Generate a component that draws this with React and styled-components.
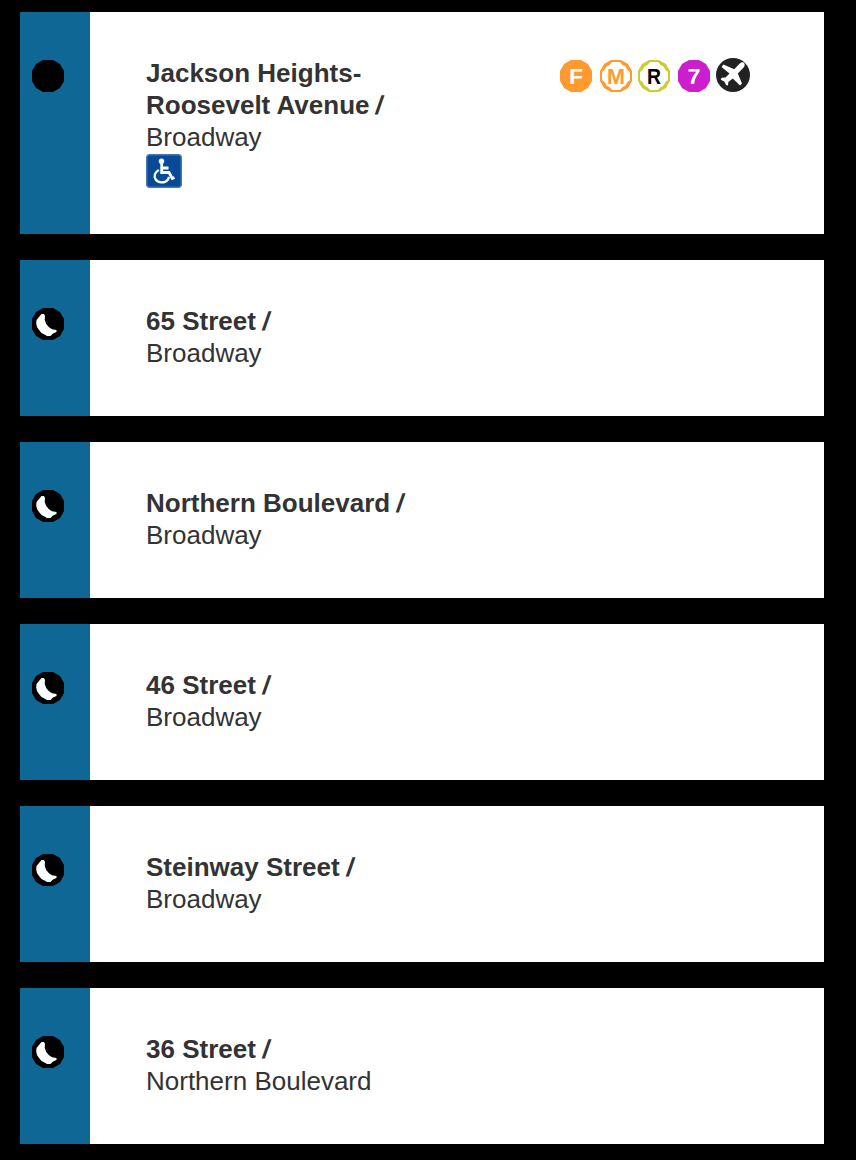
import React from 'react';
import styled, { createGlobalStyle } from 'styled-components';

const GlobalStyle = createGlobalStyle`
  * { box-sizing: border-box; }
  body {
    margin: 0;
    background: #000;
    color: #333;
    font-family: "Liberation Sans", Arial, sans-serif;
    font-size: 26px;
    line-height: 32px;
  }
`;

const StationList = styled.main`
  display: flex;
  flex-direction: column;
  gap: 26px;
  width: 856px;
  height: 1160px;
  padding: 12px 32px 16px 20px;
`;

const StationCard = styled.article`
  display: flex;
  height: ${(p) => (p.$tall ? 222 : 156)}px;
  flex: none;
  background: #fff;
`;

const LineStripe = styled.div`
  width: 70px;
  padding: 48px 0 0 12px;
  background: #0f6796;
`;

const StationName = styled.div`
  width: 414px;
  padding: 45px 0 0 56px;
`;

const Title = styled.div`
  font-weight: 700;
  white-space: nowrap;
`;

const Slash = styled.span`
  display: inline-block;
  margin-left: 7px;
  transform: skewX(-9deg);
`;

const Street = styled.div`
  white-space: nowrap;
`;

const Transfers = styled.div`
  display: flex;
  align-items: flex-start;
  padding: 48px 0 0 56px;
`;

const Icon = styled.svg`
  display: block;
  flex: none;
  margin: ${(p) => p.$margin || 0};
`;

const Letter = styled.text`
  font-family: "Liberation Sans", Arial, sans-serif;
  font-weight: 700;
  font-size: 22px;
  text-anchor: middle;
`;

const DISC = 'M11 0H21L28 4L32 11V21L28 28L21 32H11L4 28L0 21V11L4 4Z';
const HOLLOW = 'M12 2H20L22 4.5L25.5 6.5L27.5 10L30 12V20L27.5 22L25.5 25.5L22 27.5L20 30H12L10 27.5L6.5 25.5L4.5 22L2 20V12L4.5 10L6.5 6.5L10 4.5Z';

const FullTime = () => (
  <Icon width="32" height="32" viewBox="0 0 32 32">
    <path d={DISC} fill="#000" />
  </Icon>
);

const PartTime = () => (
  <Icon width="32" height="32" viewBox="0 0 32 32">
    <path d={DISC} fill="#000" />
    <path d="M9.5 6H12L13 8L12.7 12L14.2 16L17 19.3L20 21.3L24.5 22V24L21 25.5L18.5 28H15L12.5 26.5L9.5 25L7 22L5 19L4.2 15.5L4.5 12L7 9Z" fill="#fff" />
  </Icon>
);

const RouteBullet = ({ label, color, ink, width, hollow, margin }) => (
  <Icon width="32" height="32" viewBox="0 0 32 32" $margin={margin}>
    <path d={DISC} fill={color} />
    {hollow && <path d={HOLLOW} fill="#fff" />}
    <Letter
      x="16"
      y="23.7"
      fill={ink}
      textLength={width}
      lengthAdjust="spacingAndGlyphs"
    >
      {label}
    </Letter>
  </Icon>
);

const Airport = () => (
  <Icon width="34" height="34" viewBox="0 0 34 34" $margin="-2px 0 0 6px">
    <circle cx="17" cy="17" r="17" fill="#222" />
    <path
      d="M27.5 4.5C29.2 5.4 29 7.8 27.6 9.6L21.8 15.5L26 25.5L24 27.5L16.8 20.5L12.3 24L12 27.5L10 27L8.3 23.5L4.8 21.8L5.5 19.8L9.5 19.5L13.5 15.5L5.5 9L7.5 6.5L18.2 11.2L23.8 5.5C25 4.2 26.3 3.9 27.5 4.5Z"
      fill="#fff"
    />
  </Icon>
);

const Accessible = () => (
  <Icon width="36" height="34" viewBox="0 0 36 34" $margin="1px 0 0">
    <rect x="0.75" y="0.75" width="34.5" height="32.5" rx="3" fill="#084a98" stroke="#4676b4" strokeWidth="1.5" />
    <circle cx="15.5" cy="7.2" r="2.7" fill="#fff" />
    <path d="M15.7 9V18.5H23L26.3 24.5L28.5 23.5M16 14H22.5" fill="none" stroke="#fff" strokeWidth="2.8" />
    <path d="M13 16C9 18 7.5 22 9.5 25.2C12 29.5 19 29.5 22 25.5L23 23" fill="none" stroke="#fff" strokeWidth="2.3" />
  </Icon>
);

const stations = [
  { title: '65 Street', street: 'Broadway' },
  { title: 'Northern Boulevard', street: 'Broadway' },
  { title: '46 Street', street: 'Broadway' },
  { title: 'Steinway Street', street: 'Broadway' },
  { title: '36 Street', street: 'Northern Boulevard' },
];

export default function App() {
  return (
    <>
      <GlobalStyle />
      <StationList>
        <StationCard $tall>
          <LineStripe><FullTime /></LineStripe>
          <StationName>
            <Title>Jackson Heights-</Title>
            <Title>Roosevelt Avenue<Slash>/</Slash></Title>
            <Street>Broadway</Street>
            <Accessible />
          </StationName>
          <Transfers>
            <RouteBullet label="F" color="#ff9a2e" ink="#fff" width="14" />
            <RouteBullet label="M" color="#ff9a2e" ink="#ff9a2e" width="18" hollow margin="0 0 0 8px" />
            <RouteBullet label="R" color="#cccc33" ink="#000" width="14" hollow margin="0 0 0 6px" />
            <RouteBullet label="7" color="#cc1ecc" ink="#fff" width="13" margin="0 0 0 8px" />
            <Airport />
          </Transfers>
        </StationCard>
        {stations.map((s) => (
          <StationCard key={s.title}>
            <LineStripe><PartTime /></LineStripe>
            <StationName>
              <Title>{s.title}<Slash>/</Slash></Title>
              <Street>{s.street}</Street>
            </StationName>
          </StationCard>
        ))}
      </StationList>
    </>
  );
}
